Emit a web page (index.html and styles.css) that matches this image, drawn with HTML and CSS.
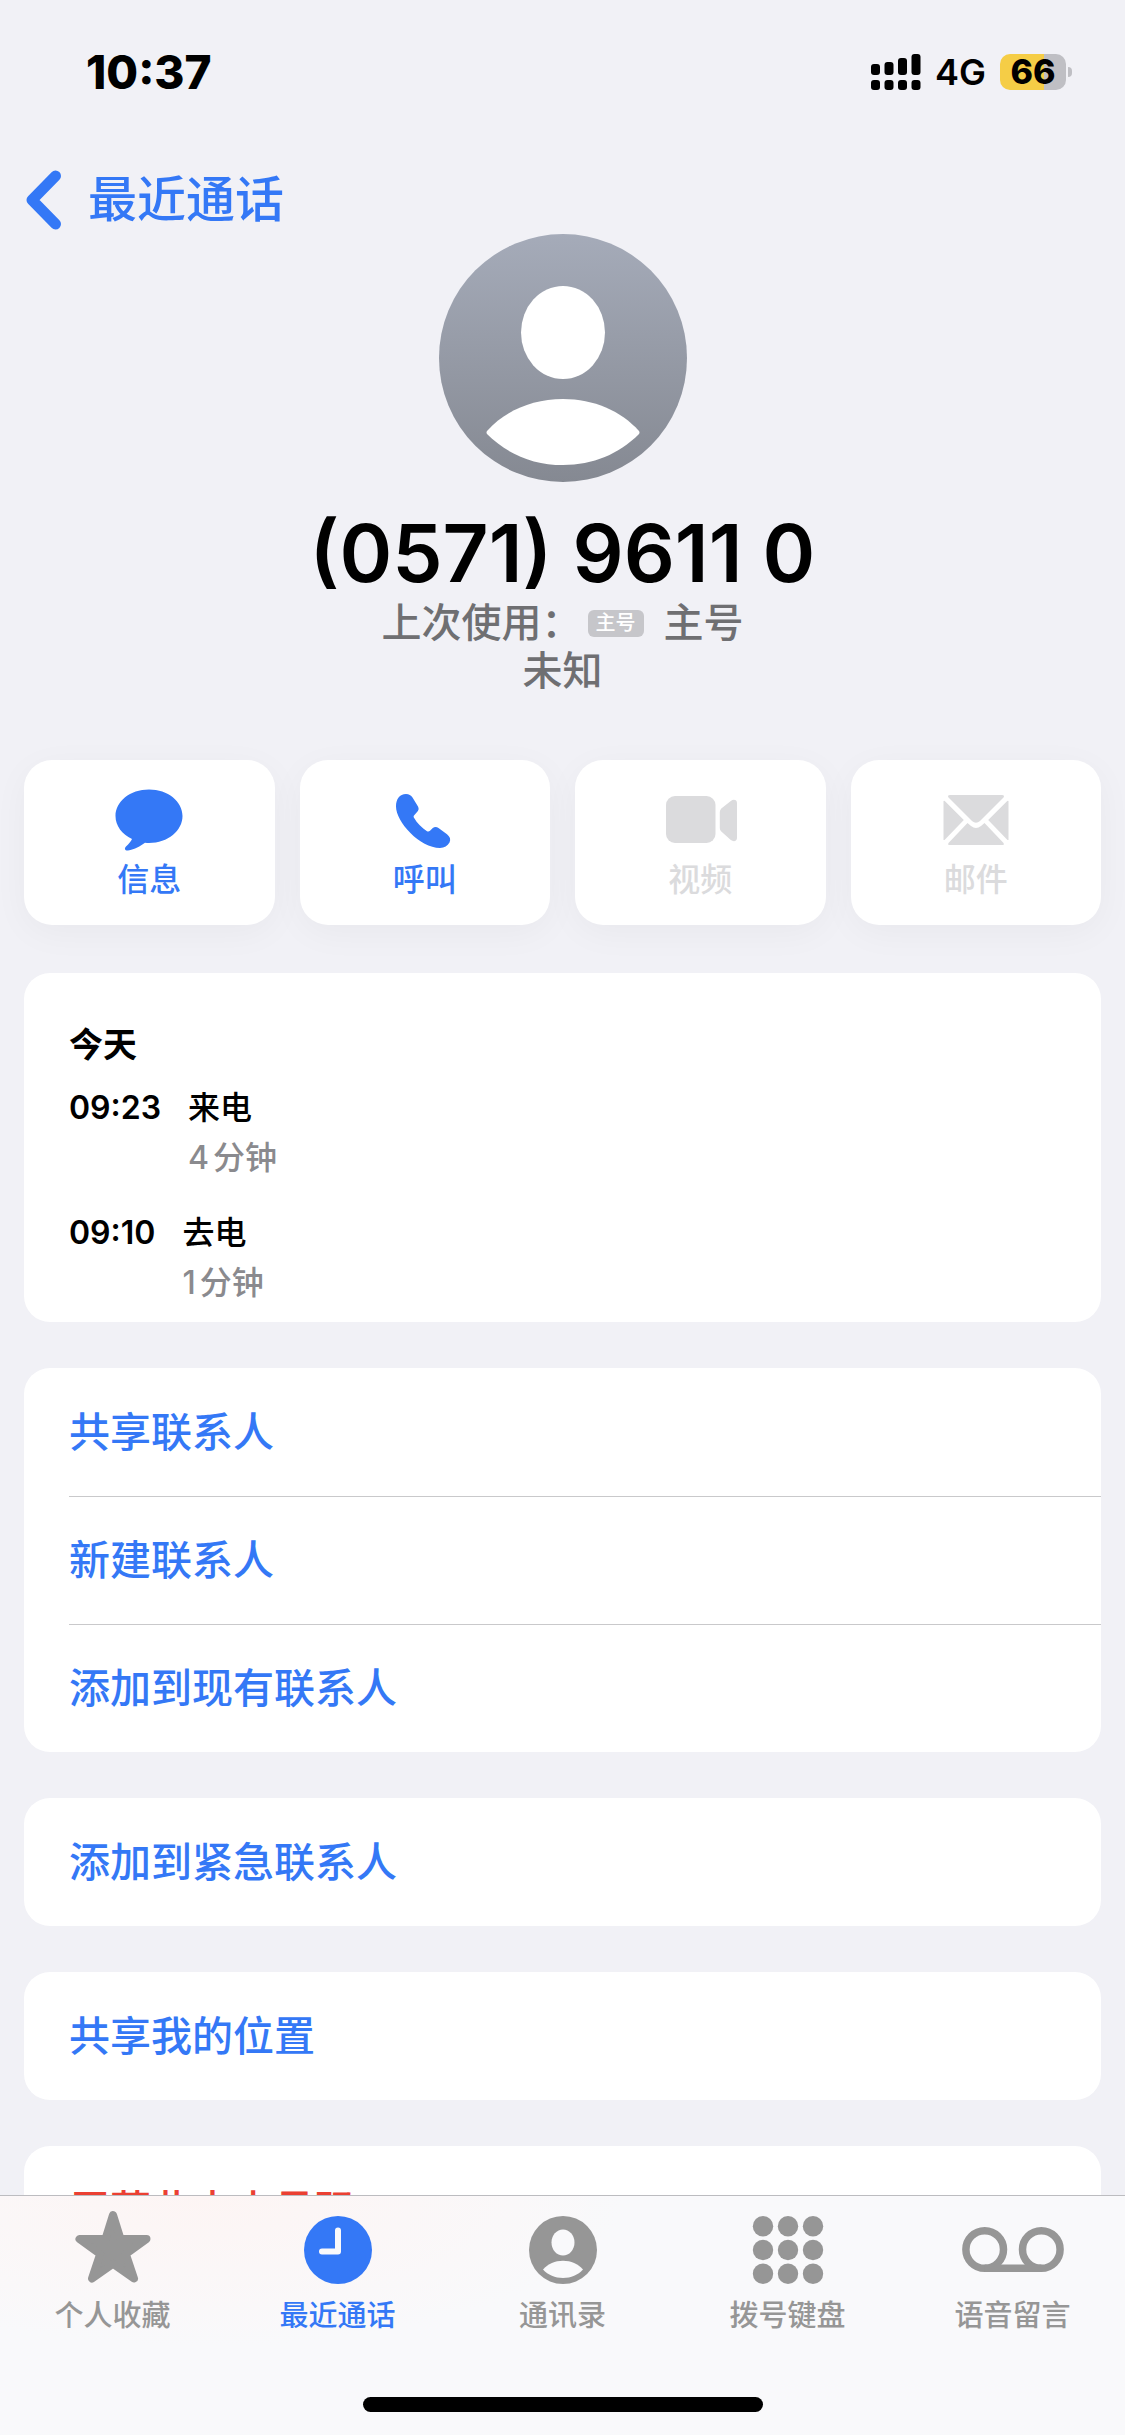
FILE: index.html
```html
<!DOCTYPE html>
<html lang="zh-CN">
<head>
<meta charset="utf-8">
<meta name="viewport" content="width=device-width, initial-scale=1">
<title>通话详情</title>
<link rel="stylesheet" href="styles.css">
</head>
<body>
<header class="status">
  <time class="status-time">10:37</time>
  <div class="status-right">
    <svg class="signal" viewBox="0 0 50 36" aria-hidden="true">
      <rect x="0" y="10" width="9" height="11" rx="3"/><rect x="13.5" y="8" width="9" height="13" rx="3"/><rect x="27" y="4" width="9" height="17" rx="3"/><rect x="40.5" y="0" width="9" height="21" rx="3"/>
      <rect x="0" y="26" width="9" height="10" rx="3"/><rect x="13.5" y="26" width="9" height="10" rx="3"/><rect x="27" y="26" width="9" height="10" rx="3"/><rect x="40.5" y="26" width="9" height="10" rx="3"/>
    </svg>
    <span class="network">4G</span>
    <span class="battery"><span class="battery-body">66</span><span class="battery-cap"></span></span>
  </div>
</header>

<nav class="nav">
  <a class="back" href="#recents">
    <svg class="back-icon" viewBox="0 0 36 60" aria-hidden="true"><path d="M29.500 6 6 30l23.500 24"/></svg>
    最近通话
  </a>
</nav>

<main class="content">
  <section class="profile">
    <svg class="avatar" viewBox="0 0 248 248" aria-hidden="true">
      <defs><linearGradient id="avatar-fill" x1="0" y1="0" x2="0" y2="1"><stop offset="0" stop-color="#a5abb9"/><stop offset="1" stop-color="#858992"/></linearGradient></defs>
      <circle cx="124" cy="124" r="124" fill="url(#avatar-fill)"/>
      <ellipse cx="124" cy="98.500" rx="42" ry="46.500" fill="#fff"/>
      <path d="M48 197c18-20 45-32 76-32s58 12 76 32q1 1.500 0 3c-20 20-46 31-76 31s-56-11-76-31q-1-1.500 0-3Z" fill="#fff"/>
    </svg>
    <h1 class="number">(0571) 9611 0</h1>
    <p class="detail">上次使用： <span class="sim">主号</span> <span>主号</span></p>
    <p class="detail">未知</p>
  </section>

  <section class="actions">
    <button class="action" type="button">
      <svg class="action-icon" viewBox="0 0 76 62" aria-hidden="true"><path d="M38 .5C57 .5 71.500 12.500 71.500 27S57 54 38 54q-2 0-4-.3C29 57 24 60.500 17 61.500c-3 .3-4-2-2-4 3-3 5-5 6-7.500C11 45 4.500 37 4.500 27 4.500 12.500 19 .5 38 .5Z"/></svg>
      信息
    </button>
    <button class="action" type="button">
      <svg class="action-icon" viewBox="0 0 76 62" aria-hidden="true"><path d="M19 5c3 0 5 1.200 6.500 3.500l5.500 9c1 2 .8 3.500-.5 5l-3.500 4c-.6.800-.4 1.400 0 2.200 3 5.300 8 10.300 13 13.500 1 .6 2 .5 3-.4l2.500-2.500c2-1.800 4-1.800 6-.3l8.500 6.300c3 2.500 4 5 2.500 8.300C60.500 57 57.500 59 53 59 33 59 9 33 9 17.500 9 10 12.500 5 19 5Z"/></svg>
      呼叫
    </button>
    <button class="action" type="button" disabled>
      <svg class="action-icon" viewBox="0 0 76 62" aria-hidden="true"><rect x="4" y="7" width="49.500" height="47" rx="9"/><path d="M57.800 23q0-2 1.500-3.500l9.500-7.500c3-2.200 6.200-1 6.200 2v35c0 3-3.200 4.200-6.200 2l-9.500-8.500q-1.500-1.500-1.500-3.500Z"/></svg>
      视频
    </button>
    <button class="action" type="button" disabled>
      <svg class="action-icon" viewBox="0 0 76 62" aria-hidden="true"><path d="M10.500 8.500Q9 6 12 6h52q3 0 1.500 2.500L42 32q-4 3.500-8 0ZM5.500 12q1-.5 1.500.2L25.800 31 7 50.500q-.7.800-1.500.5ZM70.500 12q-1-.5-1.500.2L50.200 31 69 50.500q.7.800 1.500.5ZM10.500 54 29.500 34l3.500 3q5 4 10 0l3.500-3 19 20q1 2-1 2h-53q-2 0-1-2Z"/></svg>
      邮件
    </button>
  </section>

  <div class="cards">
    <section class="card history">
      <h2 class="day">今天</h2>
      <ul class="calls">
        <li class="call"><time>09:23</time><div><p>来电</p><p class="duration">4分钟</p></div></li>
        <li class="call"><time>09:10</time><div><p>去电</p><p class="duration">1分钟</p></div></li>
      </ul>
    </section>
    <section class="card">
      <button class="row" type="button">共享联系人</button>
      <button class="row" type="button">新建联系人</button>
      <button class="row" type="button">添加到现有联系人</button>
    </section>
    <section class="card"><button class="row" type="button">添加到紧急联系人</button></section>
    <section class="card"><button class="row" type="button">共享我的位置</button></section>
    <section class="card"><button class="row danger" type="button">屏蔽此来电号码</button></section>
  </div>
</main>

<footer class="dock">
  <nav class="tabs">
    <a class="tab" href="#favorites">
      <svg class="tab-icon" viewBox="0 0 104 76" aria-hidden="true"><path d="M52 5 59.500 29H85.500L64.800 44 73 68.500 52 53.800 31 68.500 39.200 44 18.500 29H44.500Z" stroke="currentColor" stroke-width="8" stroke-linejoin="round"/></svg>
      个人收藏
    </a>
    <a class="tab active" href="#recents" aria-current="page">
      <svg class="tab-icon" viewBox="0 0 104 76" aria-hidden="true"><circle cx="52" cy="40" r="34"/><path d="M52 20.500V41.500H36" fill="none" stroke="#f9f9fb" stroke-width="6" stroke-linecap="round" stroke-linejoin="round"/></svg>
      最近通话
    </a>
    <a class="tab" href="#contacts">
      <svg class="tab-icon" viewBox="0 0 104 76" aria-hidden="true"><circle cx="52" cy="40" r="34"/><ellipse cx="52" cy="32.500" rx="11.500" ry="13" fill="#f9f9fb"/><path d="M32 59.500c5-5.500 12-8.800 20-8.800s15 3.300 20 8.800c-5 5.500-12 8.500-20 8.500s-15-3-20-8.500Z" fill="#f9f9fb"/></svg>
      通讯录
    </a>
    <a class="tab" href="#keypad">
      <svg class="tab-icon" viewBox="0 0 104 76" aria-hidden="true"><circle cx="27" cy="16.200" r="10.200"/><circle cx="52" cy="16.200" r="10.200"/><circle cx="77" cy="16.200" r="10.200"/><circle cx="27" cy="40" r="10.200"/><circle cx="52" cy="40" r="10.200"/><circle cx="77" cy="40" r="10.200"/><circle cx="27" cy="63.800" r="10.200"/><circle cx="52" cy="63.800" r="10.200"/><circle cx="77" cy="63.800" r="10.200"/></svg>
      拨号键盘
    </a>
    <a class="tab" href="#voicemail">
      <svg class="tab-icon" viewBox="0 0 104 76" aria-hidden="true"><g fill="none" stroke="currentColor" stroke-width="7.500"><circle cx="23.700" cy="39.500" r="18.800"/><circle cx="80.300" cy="39.500" r="18.800"/><path d="M23.700 58.300H80.300"/></g></svg>
      语音留言
    </a>
  </nav>
  <div class="home"></div>
</footer>
</body>
</html>
```
FILE: styles.css
```css
:root {
  --blue: #3478f6;
  --bg: #f1f1f6;
  --muted: #dbdbdd;
}

* { box-sizing: border-box; }

/* The page fills the window; only the content between the bars scrolls */
body {
  display: flex;
  flex-direction: column;
  height: 100vh;
  margin: 0;
  background: var(--bg);
  color: #000;
  font-family: Inter, "Noto Sans CJK SC", sans-serif;
  font-weight: 500;
}

h1, h2, p, ul { margin: 0; padding: 0; }
ul { list-style: none; }
a { color: inherit; text-decoration: none; }
button { border: 0; margin: 0; font: inherit; color: inherit; background: none; }
svg { display: block; fill: currentColor; }

/* Status bar */
.status {
  display: flex;
  flex: none;
  align-items: center;
  justify-content: space-between;
  height: 144px;
  padding: 0 53px 0 86px;
}
.status-time { font-size: 46px; font-weight: 800; }
.status-right { display: flex; align-items: center; gap: 14px; }
.signal { width: 50px; height: 36px; }
.network { font-size: 36px; font-weight: 600; line-height: 36px; }
.battery { display: flex; align-items: center; gap: 2px; }
.battery-body {
  width: 66px;
  border-radius: 10px;
  background: linear-gradient(90deg, #f5cd46 66%, #bfbfc4 66%);
  font-size: 34px;
  font-weight: 800;
  line-height: 36px;
  text-align: center;
}
.battery-cap { width: 4px; height: 10px; border-radius: 0 5px 5px 0; background: #bfbfc4; }

/* Navigation */
.nav { display: flex; flex: none; padding: 22px 26px 0; }
.back {
  display: flex;
  align-items: center;
  gap: 26px;
  color: var(--blue);
  font-size: 49px;
  line-height: 68px;
}
.back-icon { width: 36px; height: 60px; fill: none; stroke: currentColor; stroke-width: 11; stroke-linecap: round; stroke-linejoin: round; }

/* Contact summary */
.content {
  flex: 1;
  min-height: 0;
  padding: 0 24px 46px;
  overflow-y: auto;
  scrollbar-width: none;
}
.profile { display: flex; flex-direction: column; align-items: center; }
.avatar { width: 248px; height: 248px; }
.number { margin-top: 25px; font-size: 80px; font-weight: 600; line-height: 92px; }
.detail {
  display: flex;
  align-items: center;
  color: #6f6f72;
  font-size: 40px;
  line-height: 48px;
}
.sim {
  margin: 0 20px 0 6px;
  padding: 0 8px;
  border-radius: 6px;
  background: #c6c6ca;
  color: #fff;
  font-size: 20px;
  line-height: 27px;
}

/* Quick actions */
.actions {
  display: grid;
  grid-template-columns: repeat(4, 1fr);
  gap: 25px;
  margin: 65px 0 48px;
}
.action {
  display: flex;
  flex-direction: column;
  align-items: center;
  gap: 9px;
  padding: 29px 0 25px;
  border-radius: 28px;
  background: #fff;
  box-shadow: 0 8px 36px rgba(0, 0, 0, .04);
  color: var(--blue);
  font-size: 32px;
  line-height: 40px;
}
.action:disabled { color: var(--muted); }
.action-icon { width: 76px; height: 62px; }

/* Cards */
.cards { display: flex; flex-direction: column; gap: 46px; }
.card { overflow: hidden; border-radius: 26px; background: #fff; }
.history { padding: 47px 45px 14px; line-height: 50px; }
.day { margin-bottom: 13px; font-size: 34px; font-weight: 600; }
.calls { display: flex; flex-direction: column; gap: 25px; font-size: 32px; }
.call { display: flex; gap: 27px; }
.call time { font-weight: 600; }
.duration { color: #8a8a8e; text-autospace: normal; }
.row {
  display: block;
  width: 100%;
  padding: 0 45px;
  color: var(--blue);
  font-size: 41px;
  line-height: 128px;
  text-align: left;
}
.row + .row {
  background: linear-gradient(#c9c9cb, #c9c9cb) 45px 0 / 100% 1px no-repeat;
}
.danger { color: #eb4032; }

/* Tab bar */
.dock {
  flex: none;
  border-top: 1px solid #bcbcc0;
  background: radial-gradient(ellipse 420px 150px at 18% 0, #fdf5f4, transparent), #f9f9fb;
}
.tabs { display: grid; grid-template-columns: repeat(5, 1fr); padding-top: 14px; }
.tab {
  display: flex;
  flex-direction: column;
  align-items: center;
  gap: 10px;
  color: #969696;
  font-size: 29px;
  line-height: 40px;
}
.tab.active { color: var(--blue); }
.tab-icon { width: 104px; height: 76px; }
.home { width: 400px; height: 15px; margin: 61px auto 23px; border-radius: 8px; background: #000; }
```
